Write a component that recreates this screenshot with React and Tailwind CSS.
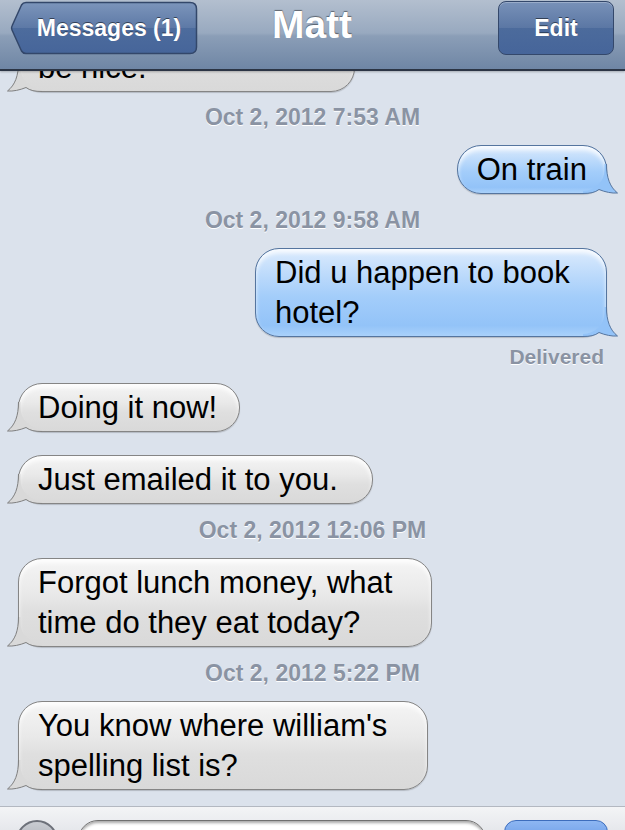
import React from "react";

function Tail({ side }) {
  if (side === "right") {
    return (
      <svg width="36" height="34" viewBox="0 0 36 34" className="pointer-events-none absolute -right-[13px] -bottom-[1px]">
        <path
          d="M23.5,4 C23.5,18 27,27 34.5,33 C29,33.5 22,32 16,29.5 C12,32.5 7,33.5 0,33.5 L0,31 A21.5,21.5 0 0 0 21.5,9.5 L21.5,4 Z"
          fill="#93c3f8"
        />
        <path
          d="M23.5,4 C23.5,18 27,27 34.5,33 C29,33.5 22,32 16,29.5 C12,32.5 7,33.5 0,33.5"
          fill="none"
          stroke="#55759f"
          strokeWidth="1"
        />
      </svg>
    );
  }
  return (
    <svg width="36" height="34" viewBox="0 0 36 34" className="pointer-events-none absolute -left-[13px] -bottom-[1px]">
      <path
        d="M12.5,4 C12.5,18 9,27 1.5,33 C7,33.5 14,32 20,29.5 C24,32.5 29,33.5 36,33.5 L36,31 A21.5,21.5 0 0 1 14.5,9.5 L14.5,4 Z"
        fill="#d9d9d9"
      />
      <path
        d="M12.5,4 C12.5,18 9,27 1.5,33 C7,33.5 14,32 20,29.5 C24,32.5 29,33.5 36,33.5"
        fill="none"
        stroke="#7f7f7f"
        strokeWidth="1"
      />
    </svg>
  );
}

function Bubble({ side, className, children }) {
  const sideClass =
    side === "right"
      ? "self-end mr-[18px] border-[#55759f] bg-[linear-gradient(to_bottom,#dcebfd_0%,#bcdafb_30%,#a3cdfa_55%,#93c3f8_88%,#a9d1fa_100%)]"
      : "self-start ml-[18px] border-[#858585] bg-[linear-gradient(to_bottom,#f5f5f5_0%,#e9e9e9_40%,#dfdfdf_60%,#d9d9d9_100%)]";
  return (
    <div
      className={`relative rounded-[24px] border pt-[4px] pb-[3px] pl-[19px] pr-[19px] text-[31px] leading-[40px] text-black shadow-[inset_0_4px_4px_rgba(255,255,255,0.8),0_1px_1px_rgba(0,0,0,0.18)] ${sideClass} ${className || ""}`}
    >
      <Tail side={side} />
      <span className="relative whitespace-nowrap">{children}</span>
    </div>
  );
}

function Stamp({ className, children }) {
  return (
    <div className={`text-center text-[23px] leading-[26px] font-bold text-[#8a93a3] [text-shadow:0_1px_0_#ffffff] ${className}`}>
      {children}
    </div>
  );
}

function BackButton() {
  return (
    <div className="relative flex h-[54px] w-[188px] items-center justify-center pl-[10px]">
      <svg width="188" height="54" viewBox="0 0 188 54" className="absolute inset-0">
        <defs>
          <linearGradient id="backFill" x1="0" y1="0" x2="0" y2="1">
            <stop offset="0" stopColor="#7c95bb" />
            <stop offset="0.5" stopColor="#5d79a6" />
            <stop offset="0.5" stopColor="#4d6c9d" />
            <stop offset="1" stopColor="#46659a" />
          </linearGradient>
        </defs>
        <path
          d="M16,1.5 H180 Q186.5,1.5 186.5,8 V46 Q186.5,52.5 180,52.5 H16 Q13,52.5 11.5,50 L2,29 Q1,27 2,25 L11.5,4 Q13,1.5 16,1.5 Z"
          fill="url(#backFill)"
          stroke="#33476a"
          strokeWidth="1.5"
        />
      </svg>
      <span className="relative whitespace-nowrap text-[23px] font-bold text-white [text-shadow:0_-1px_0_rgba(0,0,0,0.5)]">
        Messages (1)
      </span>
    </div>
  );
}

export default function App() {
  return (
    <div className="flex h-[830px] w-[625px] flex-col overflow-hidden bg-[#dbe2ec] font-['Liberation_Sans',Arial,sans-serif]">
      <header className="relative z-10 grid h-[71px] shrink-0 grid-cols-[1fr_auto_1fr] items-start border-b-2 border-[#2c3545] bg-[linear-gradient(to_bottom,#b3bfcf_0%,#98a9bf_48%,#8b9eb7_52%,#6f86a5_100%)] pl-[10px] pr-[11px] pt-[1px] shadow-[0_1px_2px_rgba(0,0,0,0.25)]">
        <div className="flex justify-start">
          <BackButton />
        </div>
        <div className="h-[48px] text-[39px] leading-[48px] font-bold text-white [text-shadow:0_-1px_1px_rgba(0,0,0,0.45)]">
          Matt
        </div>
        <div className="flex justify-end">
          <div className="flex h-[54px] w-[116px] items-center justify-center rounded-[8px] border border-[#34486b] bg-[linear-gradient(to_bottom,#7891b8_0%,#5b77a4_50%,#4c6b9c_50%,#46659a_100%)] text-[23px] font-bold text-white shadow-[inset_0_1px_0_rgba(255,255,255,0.25)] [text-shadow:0_-1px_0_rgba(0,0,0,0.5)]">
            Edit
          </div>
        </div>
      </header>

      <main className="flex flex-1 flex-col overflow-hidden">
        <Bubble side="left" className="-mt-[68px] w-[337px]">
          Sure, that would
          <br />
          be nice.
        </Bubble>
        <Stamp className="mt-[12px]">Oct 2, 2012 7:53 AM</Stamp>
        <Bubble side="right" className="mt-[15px]">On train</Bubble>
        <Stamp className="mt-[13px]">Oct 2, 2012 9:58 AM</Stamp>
        <Bubble side="right" className="mt-[15px] w-[352px]">
          Did u happen to book
          <br />
          hotel?
        </Bubble>
        <div className="mt-[9px] pr-[21px] text-right text-[21px] leading-[22px] font-bold text-[#8a93a3] [text-shadow:0_1px_0_#ffffff]">
          Delivered
        </div>
        <Bubble side="left" className="mt-[15px] w-[222px]">Doing it now!</Bubble>
        <Bubble side="left" className="mt-[23px] w-[355px]">Just emailed it to you.</Bubble>
        <Stamp className="mt-[13px]">Oct 2, 2012 12:06 PM</Stamp>
        <Bubble side="left" className="mt-[15px] w-[414px]">
          Forgot lunch money, what
          <br />
          time do they eat today?
        </Bubble>
        <Stamp className="mt-[13px]">Oct 2, 2012 5:22 PM</Stamp>
        <Bubble side="left" className="mt-[15px] w-[410px]">
          You know where william's
          <br />
          spelling list is?
        </Bubble>
      </main>

      <footer className="flex h-[24px] shrink-0 items-start overflow-hidden border-t border-[#b3b8c1] bg-[linear-gradient(to_bottom,#f3f4f6,#e6e8ec)] pt-[13px]">
        <div className="ml-[16px] h-[42px] w-[42px] shrink-0 rounded-full border-2 border-[#6d717a] bg-[linear-gradient(to_bottom,#c9ccd2,#9a9fa8)]" />
        <div className="ml-[20px] h-[40px] w-[408px] shrink-0 rounded-[20px] border border-[#707070] bg-white shadow-[inset_0_2px_3px_rgba(0,0,0,0.35)]" />
        <div className="ml-[18px] flex h-[40px] w-[104px] shrink-0 items-start justify-center rounded-[12px] border border-[#3d6dbd] bg-[linear-gradient(to_bottom,#8db6f2,#4f86de)] pt-[12px] text-[22px] font-bold text-white">
          Send
        </div>
      </footer>
    </div>
  );
}
